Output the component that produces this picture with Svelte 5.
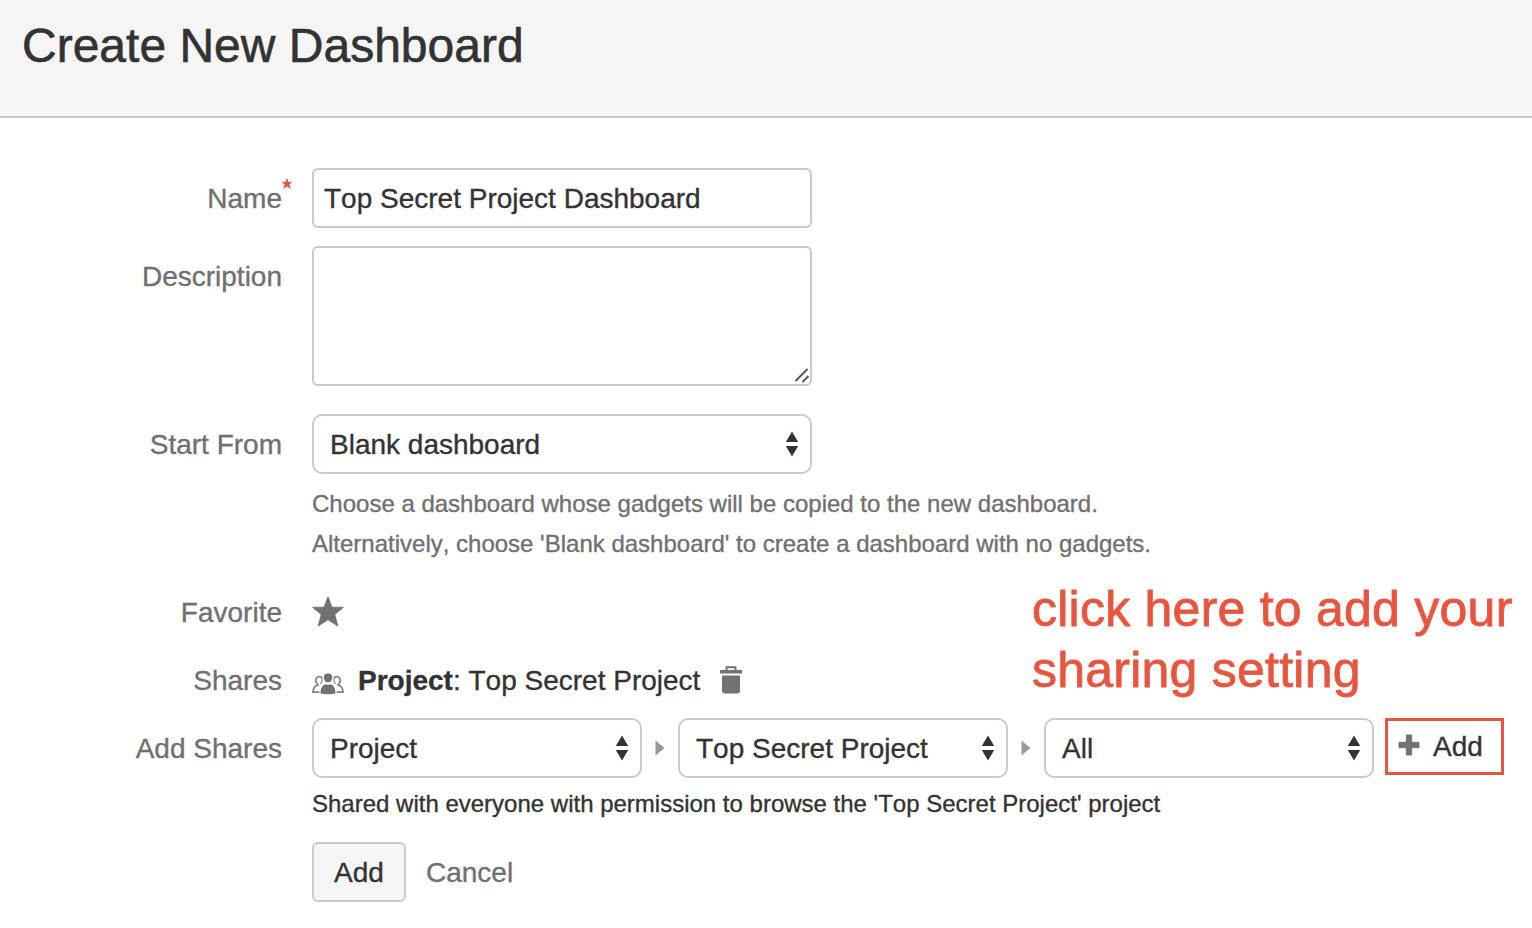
<script>
  let name = $state('Top Secret Project Dashboard');
  let description = $state('');
</script>

{#snippet arrows()}
  <svg class="arrows" width="14" height="26" viewBox="0 0 14 26" aria-hidden="true">
    <path d="M7 .5 13.2 11H.8zM7 25.5.8 15h12.4z" fill="#333" />
  </svg>
{/snippet}

{#snippet chevron()}
  <svg class="chevron" width="10" height="18" viewBox="0 0 10 18" aria-hidden="true">
    <path d="M.5 1.5 9.5 9 .5 16.5z" fill="#999" />
  </svg>
{/snippet}

<div class="page">
  <header><h1>Create New Dashboard</h1></header>

  <form>
    <div class="row">
      <label for="name">Name<svg class="required" width="12" height="12" viewBox="0 0 12 12" aria-hidden="true"><path d="M6 0 7.3 4 11.4 3.6 8.3 6.4 10.2 11 6 8.2 1.8 11 3.7 6.4.6 3.6 4.7 4z" fill="#a08f8d" /><path d="M6 1 7.2 4.6 10.2 4.5 7.8 6.6 9 10 6 7.8 3 10 4.2 6.6 1.8 4.5 4.8 4.6z" fill="#e8503c" stroke="#e8503c" stroke-width=".5" /></svg></label>
      <input id="name" class="field" bind:value={name} />
    </div>

    <div class="row area">
      <label for="description">Description</label>
      <div class="box">
        <textarea id="description" class="field" bind:value={description}></textarea>
        <svg class="grip" width="16" height="16" viewBox="0 0 16 16" aria-hidden="true">
          <path d="M1.5 14 13.5 2M8.5 15 14.5 9" fill="none" stroke="#555" stroke-width="1.8" />
        </svg>
      </div>
    </div>

    <div class="row start">
      <span class="label">Start From</span>
      <div class="select wide"><span>Blank dashboard</span>{@render arrows()}</div>
    </div>
    <p class="help">Choose a dashboard whose gadgets will be copied to the new dashboard.<br />Alternatively, choose 'Blank dashboard' to create a dashboard with no gadgets.</p>

    <div class="row favorite">
      <span class="label">Favorite</span>
      <svg class="star" width="32" height="32" viewBox="0 0 32 32" aria-label="Favorite">
        <path d="M16 .8 20 11.2 31.4 11.2 22.8 18.6 26 30.2 16 23.8 6 30.2 9.2 18.6 .6 11.2 12 11.2z" fill="#707274" stroke="#707274" stroke-width=".8" stroke-linejoin="round" />
      </svg>
    </div>

    <div class="row shares">
      <span class="label">Shares</span>
      <div class="share">
        <svg class="people" width="32" height="22" viewBox="0 0 32 22" aria-hidden="true">
          <g fill="none" stroke="#838587" stroke-width="1.8">
            <path d="M10 4.6C6.8 2.6 3.6 4 3.7 7.4c.1 2 .9 3.5 2.2 4.5C2.4 13 1 15 1 19.2h6.5" />
            <path d="M22 4.6c3.2-2 6.4-.6 6.3 2.8-.1 2-.9 3.5-2.2 4.5 3.5 1.1 4.9 3.1 4.9 7.3h-6.5" />
            <path d="M10 4.6c.2 2.6-.2 4.6-1.3 6.2M22 4.6c-.2 2.6.2 4.6 1.3 6.2" stroke-width="1.2" />
          </g>
          <path d="M11.8 4.5C11.8 1.8 13.3.6 16 .6s4.2 1.2 4.2 3.9c0 2.5-1.3 4.8-4.2 4.8s-4.2-2.3-4.2-4.8z" fill="#707274" />
          <path d="M8.5 20.6c0-5.6 2-8.6 5-9.4 1.7.7 3.3.7 5 0 3 .8 5 3.8 5 9.4-4 1-11 1-15 0z" fill="#707274" />
        </svg>
        <span class="share-text"><b>Project</b>: Top Secret Project</span>
        <svg class="trash" width="24" height="28" viewBox="0 0 24 28" aria-label="Delete">
          <path d="M7.5 4V1.2h9V4" fill="none" stroke="#707274" stroke-width="2" />
          <path d="M1 4h22v3.6H1zM3 9.6h18v15a3 3 0 0 1-3 3H6a3 3 0 0 1-3-3z" fill="#707274" />
        </svg>
      </div>
    </div>

    <div class="row add-shares">
      <span class="label">Add Shares</span>
      <div class="selects">
        <div class="select"><span>Project</span>{@render arrows()}</div>
        {@render chevron()}
        <div class="select"><span>Top Secret Project</span>{@render arrows()}</div>
        {@render chevron()}
        <div class="select"><span>All</span>{@render arrows()}</div>
        <button type="button" class="add-share">
          <svg width="22" height="22" viewBox="0 0 22 22" aria-hidden="true">
            <path d="M8.3 1h5.4v7.3H21v5.4h-7.3V21H8.3v-7.3H1V8.3h7.3z" fill="#707274" stroke="#707274" stroke-linejoin="round" />
          </svg>
          <span>Add</span>
        </button>
      </div>
    </div>
    <p class="note">Shared with everyone with permission to browse the 'Top Secret Project' project</p>

    <div class="actions">
      <button type="button" class="submit">Add</button>
      <a class="cancel" href="#cancel">Cancel</a>
    </div>
  </form>

  <div class="annotation">click here to add your<br />sharing setting</div>
</div>

<style>
  :global(body) { margin: 0; background: #fff; }
  .page {
    position: relative;
    width: 1532px;
    height: 928px;
    overflow: hidden;
    background: #fff;
    color: #333;
    font: 28px/40px "Liberation Sans", Arial, sans-serif;
    font-kerning: none;
    -webkit-text-stroke: .35px currentColor;
  }
  header {
    box-sizing: border-box;
    height: 118px;
    padding: 16px 22px 0;
    background: #f5f5f5;
    border-bottom: 2px solid #ccc8c8;
  }
  h1 { margin: 0; font-size: 48px; font-weight: 400; line-height: 60px; -webkit-text-stroke-width: .6px; }
  form { padding-top: 50px; }
  .row { display: grid; grid-template-columns: 282px 1fr; column-gap: 30px; align-items: start; }
  label, .label { position: relative; padding-top: 11px; text-align: right; color: #707070; white-space: nowrap; }
  .required { position: absolute; top: 10px; right: -11px; }
  .field {
    box-sizing: border-box;
    display: block;
    width: 500px;
    height: 60px;
    margin: 0;
    padding: 2px 10px 0;
    border: 2px solid #ccc8c8;
    border-radius: 6px;
    outline: none;
    background: #fff;
    color: #333;
    font: inherit;
    font-kerning: none;
  }
  .area { margin-top: 18px; }
  .box { position: relative; width: 500px; }
  textarea.field { height: 140px; resize: none; }
  .grip { position: absolute; right: 2px; bottom: 3px; }
  .start { margin-top: 28px; }
  .select {
    box-sizing: border-box;
    display: flex;
    align-items: center;
    justify-content: space-between;
    width: 330px;
    height: 60px;
    padding: 0 11px 0 16px;
    border: 2px solid #ccc8c8;
    border-radius: 10px;
    background: #fff;
    white-space: nowrap;
  }
  .select span, .share-text, .add-share span { padding-top: 2px; }
  .select.wide { width: 500px; }
  p { margin: 0 0 0 312px; font-size: 24px; line-height: 40px; white-space: nowrap; }
  .help { padding-top: 10px; color: #707070; }
  .favorite { height: 50px; margin-top: 18px; }
  .star { margin-top: 14px; }
  .shares { height: 50px; margin-top: 18px; }
  .share { display: flex; align-items: center; height: 40px; padding-top: 10px; }
  .people { margin-top: 8px; }
  .share-text { margin-left: 14px; }
  .trash { margin-left: 19px; }
  .add-shares { margin-top: 18px; }
  .selects { display: flex; align-items: center; }
  .chevron { margin: 0 13px; }
  .add-share {
    box-sizing: border-box;
    display: flex;
    align-items: center;
    gap: 13px;
    width: 119px;
    height: 57px;
    margin: -3px 0 0 11px;
    padding: 0 0 1px 10px;
    border: 3px solid #e8553f;
    background: #fff;
    color: #333;
    font: inherit;
    font-kerning: none;
  }
  .add-share svg { margin-top: -2px; }
  .note { margin-top: 6px; }
  .actions { display: flex; align-items: center; gap: 20px; margin: 18px 0 0 312px; }
  .submit {
    box-sizing: border-box;
    width: 94px;
    height: 60px;
    padding: 2px 0 0;
    border: 2px solid #ccc8c8;
    border-radius: 6px;
    background: #f5f5f5;
    color: #333;
    font: inherit;
    font-kerning: none;
  }
  .cancel { padding-top: 2px; color: #707070; text-decoration: none; }
  .annotation {
    position: absolute;
    left: 1032px;
    top: 579px;
    color: #e8553f;
    font-size: 50px;
    line-height: 61px;
    letter-spacing: .24px;
    white-space: nowrap;
    -webkit-text-stroke-width: .8px;
  }
</style>
